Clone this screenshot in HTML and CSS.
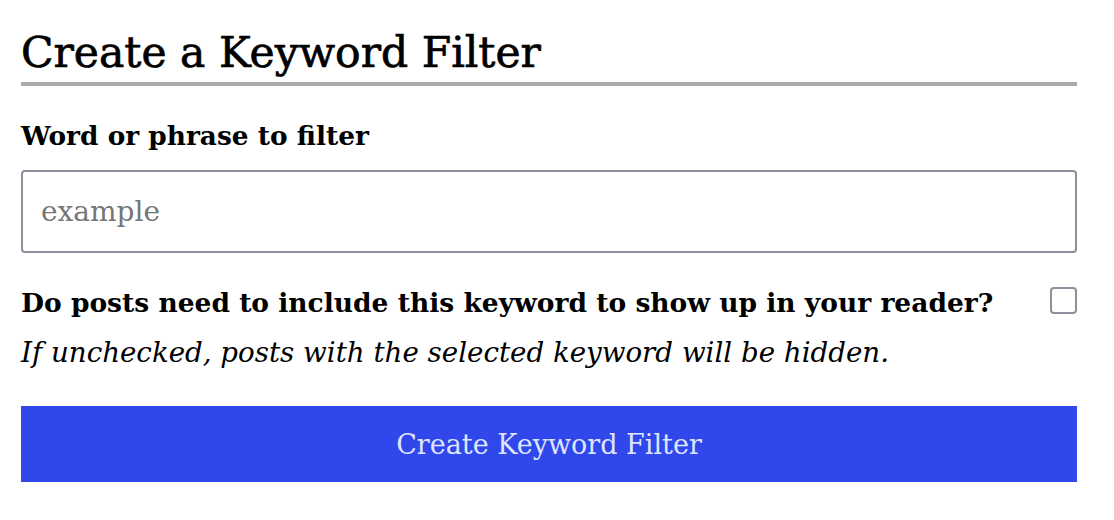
FILE: index.html
```html
<!DOCTYPE html>
<html lang="en">
<head>
<meta charset="utf-8">
<title>Create a Keyword Filter</title>
<link rel="stylesheet" href="styles.css">
</head>
<body>
<main class="page">
  <form class="filter-form">
    <h1 class="title">Create a Keyword Filter</h1>
    <label class="field-label" for="keyword">Word or phrase to filter</label>
    <input class="text-input" id="keyword" type="text" placeholder="example">
    <div class="check-row">
      <label class="check-label" for="include">Do posts need to include this keyword to show up in your reader?</label>
      <input class="checkbox" id="include" type="checkbox">
    </div>
    <p class="hint">If unchecked, posts with the selected keyword will be hidden.</p>
    <button class="submit" type="button">Create Keyword Filter</button>
  </form>
</main>
</body>
</html>
```

FILE: styles.css
```css
html, body {
  margin: 0;
  padding: 0;
  background: #ffffff;
}

body {
  font-family: "DejaVu Serif", "Liberation Serif", serif;
  color: #000000;
}

.page {
  padding: 0 37px 0 21px;
}

.filter-form {
  display: flex;
  flex-direction: column;
  width: 1056px;
}

.title {
  margin: 28px 0 0 0;
  font-size: 42.5px;
  font-weight: normal;
  -webkit-text-stroke: 0.7px #000000;
  line-height: 50px;
  padding-bottom: 4px;
  border-bottom: 4px solid #aaaaaa;
}

.field-label {
  margin-top: 34px;
  font-size: 26.4px;
  font-weight: bold;
  line-height: 32px;
}

.text-input {
  margin-top: 18px;
  box-sizing: border-box;
  width: 100%;
  height: 83px;
  border: 2px solid #8f8f9d;
  border-radius: 4px;
  padding: 0 18px;
  font-family: inherit;
  font-size: 28px;
  color: #000000;
  background: #ffffff;
  outline: none;
}

.text-input::placeholder {
  color: #767676;
}

.check-row {
  margin-top: 34px;
  display: flex;
  justify-content: space-between;
  align-items: flex-start;
}

.check-label {
  font-size: 26.5px;
  font-weight: bold;
  line-height: 32px;
}

.checkbox {
  appearance: none;
  -webkit-appearance: none;
  margin: 0;
  width: 27px;
  height: 27px;
  box-sizing: border-box;
  border: 2px solid #8f8f9d;
  border-radius: 4px;
  background: #ffffff;
}

.hint {
  margin: 18px 0 0 0;
  font-size: 27.7px;
  font-style: italic;
  line-height: 32px;
}

.submit {
  margin-top: 37px;
  height: 76px;
  width: 100%;
  border: none;
  background: #3047ec;
  color: #dfe4ff;
  font-family: inherit;
  font-size: 27px;
  padding: 0;
}
```
